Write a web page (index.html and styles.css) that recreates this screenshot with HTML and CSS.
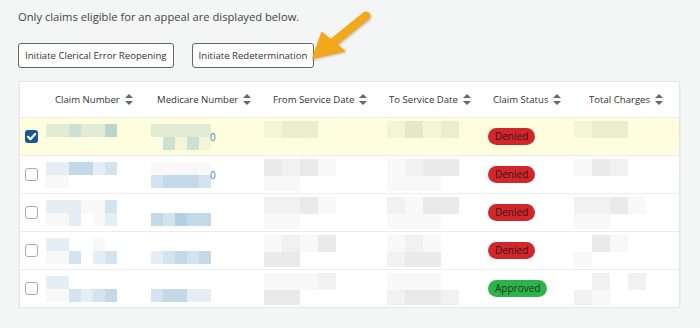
FILE: index.html
```html
<!DOCTYPE html>
<html lang="en">
<head>
    <meta charset="UTF-8">
    <title>Appeals - Claims</title>
    <link rel="stylesheet" href="styles.css">
</head>
<body>
    <div class="page">
        <p class="intro">Only claims eligible for an appeal are displayed below.</p>

        <div class="actions">
            <button class="btn">Initiate Clerical Error Reopening</button>
            <button class="btn">Initiate Redetermination</button>
        </div>

        <!-- annotation arrow pointing at the redetermination button -->
        <svg class="callout" width="700" height="80" viewBox="0 0 700 80">
            <line x1="366" y1="16" x2="334" y2="42" stroke="#f3a71c" stroke-width="9" stroke-linecap="round"/>
            <polygon points="313,58 322,33 344,51" fill="#f3a71c" stroke="#f3a71c" stroke-width="2" stroke-linejoin="round"/>
        </svg>

        <div class="card">
            <div class="thead">
                <div></div>
                <div class="th">Claim Number <span class="sort"></span></div>
                <div class="th">Medicare Number <span class="sort"></span></div>
                <div class="th">From Service Date <span class="sort"></span></div>
                <div class="th">To Service Date <span class="sort"></span></div>
                <div class="th">Claim Status <span class="sort"></span></div>
                <div class="th">Total Charges <span class="sort"></span></div>
            </div>

            <div class="row selected">
                <div class="cb"><span class="box checked"></span></div>
                <div><div class="mosaic claim"><i class="ga"></i><i class="gb"></i><i class="ga"></i><i class="ga"></i><i class="gc"></i><i class="ya"></i><i class="ya"></i><i class="ya"></i><i class="ya"></i><i class="ya"></i></div></div>
                <div class="num"><div class="mosaic medi"><i class="ga"></i><i class="ga"></i><i class="ga"></i><i class="ga"></i><i class="ga"></i><i class="ya"></i><i class="gb"></i><i class="yb"></i><i class="gb"></i><i class="yb"></i></div><span class="tail">0</span></div>
                <div><div class="mosaic wide"><i class="yb"></i><i class="yc"></i><i class="yc"></i><i class="ya"></i><i class="ya"></i><i class="ya"></i></div></div>
                <div><div class="mosaic wide"><i class="yb"></i><i class="yd"></i><i class="yb"></i><i class="yc"></i><i class="ya"></i><i class="ya"></i><i class="ya"></i><i class="ya"></i></div></div>
                <div class="status"><span class="badge denied">Denied</span></div>
                <div><div class="mosaic wide"><i class="yb"></i><i class="yc"></i><i class="yc"></i><i class="ya"></i><i class="ya"></i><i class="ya"></i></div></div>
            </div>

            <div class="row">
                <div class="cb"><span class="box"></span></div>
                <div><div class="mosaic claim"><i class="ba"></i><i class="bc"></i><i class="bc"></i><i class="ba"></i><i class="bb"></i><i class="na"></i><i class="w"></i><i class="w"></i><i class="w"></i><i class="w"></i></div></div>
                <div class="num"><div class="mosaic medi"><i class="na"></i><i class="na"></i><i class="na"></i><i class="na"></i><i class="na"></i><i class="bb"></i><i class="bc"></i><i class="bc"></i><i class="bc"></i><i class="bb"></i></div><span class="tail">0</span></div>
                <div><div class="mosaic wide"><i class="nc"></i><i class="nb"></i><i class="nc"></i><i class="na"></i><i class="na"></i><i class="na"></i></div></div>
                <div><div class="mosaic wide"><i class="na"></i><i class="nb"></i><i class="nc"></i><i class="nc"></i><i class="na"></i><i class="na"></i><i class="na"></i><i class="w"></i></div></div>
                <div class="status"><span class="badge denied">Denied</span></div>
                <div><div class="mosaic wide"><i class="na"></i><i class="nc"></i><i class="nb"></i><i class="w"></i><i class="w"></i><i class="w"></i></div></div>
            </div>

            <div class="row">
                <div class="cb"><span class="box"></span></div>
                <div><div class="mosaic claim"><i class="ba"></i><i class="ba"></i><i class="na"></i><i class="na"></i><i class="bb"></i><i class="na"></i><i class="ba"></i><i class="w"></i><i class="na"></i><i class="ba"></i></div></div>
                <div class="num"><div class="mosaic medi"><i class="w"></i><i class="w"></i><i class="w"></i><i class="w"></i><i class="w"></i><i class="bc"></i><i class="bb"></i><i class="bd"></i><i class="bc"></i><i class="bc"></i></div></div>
                <div><div class="mosaic wide"><i class="nb"></i><i class="nb"></i><i class="nc"></i><i class="na"></i><i class="na"></i><i class="na"></i></div></div>
                <div><div class="mosaic wide"><i class="nb"></i><i class="na"></i><i class="nc"></i><i class="nc"></i><i class="na"></i><i class="na"></i><i class="na"></i><i class="w"></i></div></div>
                <div class="status"><span class="badge denied">Denied</span></div>
                <div><div class="mosaic wide"><i class="nb"></i><i class="nb"></i><i class="nc"></i><i class="na"></i><i class="na"></i><i class="na"></i></div></div>
            </div>

            <div class="row">
                <div class="cb"><span class="box"></span></div>
                <div><div class="mosaic claim"><i class="ba"></i><i class="w"></i><i class="w"></i><i class="na"></i><i class="w"></i><i class="na"></i><i class="bb"></i><i class="w"></i><i class="ba"></i><i class="bb"></i></div></div>
                <div class="num"><div class="mosaic medi"><i class="w"></i><i class="w"></i><i class="w"></i><i class="w"></i><i class="w"></i><i class="ba"></i><i class="bb"></i><i class="bc"></i><i class="bb"></i><i class="bc"></i></div></div>
                <div><div class="mosaic wide"><i class="na"></i><i class="nb"></i><i class="na"></i><i class="nc"></i><i class="nc"></i><i class="nc"></i></div></div>
                <div><div class="mosaic wide"><i class="na"></i><i class="nb"></i><i class="na"></i><i class="w"></i><i class="nb"></i><i class="nc"></i><i class="nc"></i><i class="w"></i></div></div>
                <div class="status"><span class="badge denied">Denied</span></div>
                <div><div class="mosaic wide"><i class="w"></i><i class="nc"></i><i class="na"></i><i class="w"></i><i class="na"></i><i class="w"></i></div></div>
            </div>

            <div class="row">
                <div class="cb"><span class="box"></span></div>
                <div><div class="mosaic claim"><i class="ba"></i><i class="w"></i><i class="w"></i><i class="w"></i><i class="w"></i><i class="na"></i><i class="bb"></i><i class="ba"></i><i class="bb"></i><i class="bc"></i></div></div>
                <div class="num"><div class="mosaic medi"><i class="w"></i><i class="w"></i><i class="w"></i><i class="w"></i><i class="w"></i><i class="bb"></i><i class="bc"></i><i class="bc"></i><i class="ba"></i><i class="ba"></i></div></div>
                <div><div class="mosaic wide"><i class="na"></i><i class="na"></i><i class="na"></i><i class="nb"></i><i class="nc"></i><i class="nc"></i></div></div>
                <div><div class="mosaic wide"><i class="na"></i><i class="na"></i><i class="na"></i><i class="w"></i><i class="nb"></i><i class="nc"></i><i class="nc"></i><i class="nb"></i></div></div>
                <div class="status"><span class="badge approved">Approved</span></div>
                <div><div class="mosaic wide"><i class="w"></i><i class="nb"></i><i class="w"></i><i class="nb"></i><i class="nb"></i><i class="na"></i></div></div>
            </div>
        </div>
    </div>
</body>
</html>
```

FILE: styles.css
```css
body {
    margin: 0;
    background: #f4f5f5;
    font-family: "Open Sans", "Noto Sans", sans-serif;
    color: #333;
}
.page {
    position: relative;
    padding: 8px 20px 0 18px;
}
.intro {
    margin: 0;
    font-size: 11.2px;
    line-height: 18px;
    color: #444;
}
.actions {
    display: flex;
    gap: 18px;
    margin-top: 17px;
}
.btn {
    height: 25px;
    padding: 0 6px;
    font-family: inherit;
    font-size: 9.6px;
    color: #333;
    background: #fff;
    border: 1px solid #666;
    border-radius: 3px;
}
.callout {
    position: absolute;
    left: 0;
    top: 0;
    filter: drop-shadow(1px 1px 1px rgba(0, 0, 0, 0.2));
}
.card {
    margin: 13px 0 0 1px;
    background: #fff;
    border: 1px solid #e6e6e6;
    box-shadow: 0 1px 2px rgba(0, 0, 0, 0.06);
}
.thead {
    display: grid;
    grid-template-columns: 35px 102px 116px 116px 104px 96px 1fr;
    align-items: center;
    height: 35px;
    font-size: 9.6px;
    color: #333;
}
.th {
    display: flex;
    align-items: center;
    gap: 5px;
    white-space: nowrap;
}
.sort {
    width: 0;
    height: 11px;
    position: relative;
    border-left: 4px solid transparent;
    border-right: 4px solid transparent;
    box-sizing: border-box;
}
.sort::before, .sort::after {
    content: "";
    position: absolute;
    left: -4px;
    border-left: 4px solid transparent;
    border-right: 4px solid transparent;
}
.sort::before {
    top: 0;
    border-bottom: 4px solid #666;
}
.sort::after {
    bottom: 0;
    border-top: 4px solid #666;
}
.row {
    display: grid;
    grid-template-columns: 26px 105px 113px 123px 101px 86px 1fr;
    align-items: center;
    height: 37px;
    border-top: 1px solid #ececec;
}
.row.selected {
    background: #fefedf;
}
.cb {
    padding-left: 5px;
    display: flex;
}
.box {
    width: 11px;
    height: 11px;
    border: 1px solid #aaa;
    border-radius: 3px;
    background: #fff;
}
.box.checked {
    width: 13px;
    height: 13px;
    border: none;
    background: #1b5593 url("data:image/svg+xml,%3Csvg xmlns='http://www.w3.org/2000/svg' viewBox='0 0 13 13'%3E%3Cpath d='M3 6.8l2.4 2.4L10.2 4' fill='none' stroke='%23fff' stroke-width='2.2' stroke-linecap='round' stroke-linejoin='round'/%3E%3C/svg%3E") no-repeat center;
}
.mosaic {
    display: grid;
    grid-template-rows: 13px 13px;
}
.mosaic i {
    display: block;
}
.mosaic.claim {
    grid-template-columns: 23px 12px 12px 12px 12px;
    width: 71px;
}
.mosaic.medi {
    grid-template-columns: repeat(5, 12px);
}
.mosaic.wide {
    grid-template-columns: repeat(4, 18px);
    grid-template-rows: 17px 15px;
}
.num {
    display: flex;
    align-items: center;
}
.tail {
    font-size: 10px;
    color: #3b7fc4;
    margin-left: -1px;
}
.status {
    display: flex;
    align-items: center;
}
.badge {
    height: 17px;
    line-height: 17px;
    padding: 0 7px;
    border-radius: 9px;
    font-size: 10px;
    color: #3a1414;
}
.badge.denied {
    background: #d1262b;
}
.badge.approved {
    background: #2eb34c;
    color: #123a1c;
}
.ya { background: #fdfde2; }
.yb { background: #f4f5d6; }
.yc { background: #ecedcf; }
.yd { background: #e5e7c6; }
.ga { background: #e2ebd4; }
.gb { background: #cde1d2; }
.gc { background: #bad6ca; }
.ba { background: #e4eef4; }
.bb { background: #d3e4ef; }
.bc { background: #c3d9e8; }
.bd { background: #b3d0e3; }
.na { background: #f8f8f8; }
.nb { background: #f1f1f1; }
.nc { background: #eaeaea; }
.w { background: transparent; }
```
